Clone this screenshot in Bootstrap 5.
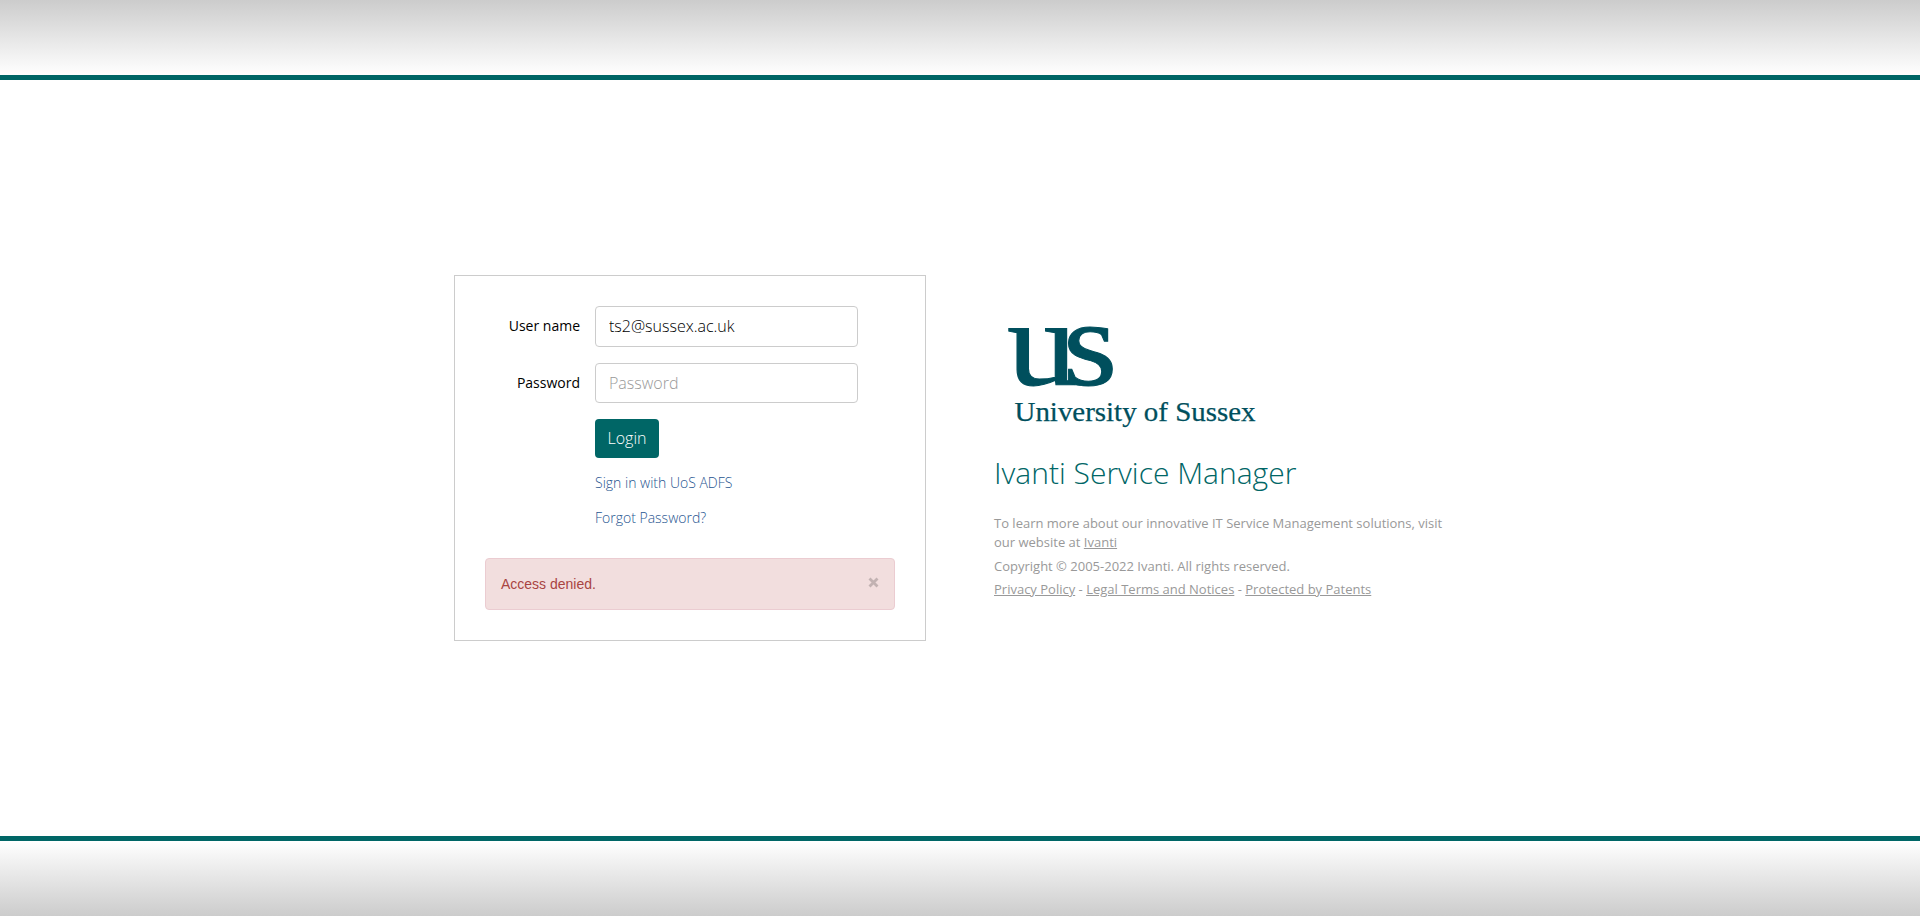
<!DOCTYPE html>
<html lang="en">
<head>
<meta charset="utf-8">
<meta name="viewport" content="width=device-width, initial-scale=1">
<title>Ivanti Service Manager</title>
<link href="https://cdn.jsdelivr.net/npm/bootstrap@5.3.0/dist/css/bootstrap.min.css" rel="stylesheet">
<style>
body{font-family:"Open Sans",sans-serif;font-size:14px;line-height:20px;color:#000;background:#fff}
.band{height:80px;flex:none}
.band-top{background:linear-gradient(#ccc,#fff);border-bottom:5px solid #006666}
.band-bottom{background:linear-gradient(#fff,#ccc);border-top:5px solid #006666}
.panes{width:1012px;gap:68px}
.login-box{width:472px;height:366px;border:1px solid #ccc;padding:30px}
.field{display:grid;grid-template-columns:95px 263px;column-gap:15px}
.field label{text-align:right}
.field .user-label{padding-bottom:2px}
.login-box .form-control{height:41px;padding:0 13px 2px;border:1px solid #ccc;border-radius:4px;font-size:16px;font-weight:300;color:#000}
.login-box .form-control.pw{height:40px;padding-bottom:0}
.form-control::placeholder{color:#999;opacity:1}
.btn-login{width:64px;height:39px;padding:0 0 2px;border:0;border-radius:4px;background:#006666;color:#fff;font-size:16px;font-weight:300}
.btn-login:hover{background:#005555;color:#fff}
.actions{margin-left:110px}
.actions a{color:#1f5590;font-weight:300;text-decoration:none;margin-top:15px}
.denied{height:52px;margin-top:30px;padding:0 15px;border:1px solid #ebccd1;border-radius:4px;background:#f2dede;color:#a94442;font-family:"Liberation Sans",sans-serif}
.info{width:472px;height:366px}
.info h1{font-size:30px;line-height:40px;font-weight:300;color:#006666}
.fine{margin-top:21px;font-size:13px;line-height:19px;color:#999}
.fine p{margin-bottom:5px}
.fine a{color:#999}
</style>
</head>
<body>
<div class="d-flex flex-column vh-100 overflow-hidden">
  <header class="band band-top"></header>
  <main class="flex-grow-1 d-flex align-items-center justify-content-center">
    <div class="panes d-flex">
      <form class="login-box">
        <div class="field align-items-center">
          <label for="user" class="user-label">User name</label>
          <input id="user" class="form-control" type="text" value="ts2@sussex.ac.uk">
        </div>
        <div class="field align-items-center mt-3">
          <label for="pass">Password</label>
          <input id="pass" class="form-control pw" type="password" placeholder="Password">
        </div>
        <div class="actions mt-3 d-flex flex-column align-items-start">
          <button class="btn btn-login" type="button">Login</button>
          <a href="#">Sign in with UoS ADFS</a>
          <a href="#">Forgot Password?</a>
        </div>
        <div class="denied d-flex align-items-center justify-content-between">
          <span>Access denied.</span>
          <svg width="12" height="12" viewBox="0 0 12 12" class="mb-1" aria-label="Close"><path d="M2.500 2.500l8 8M10.500 2.500l-8 8" stroke="#c2b2b2" stroke-width="2.800"/></svg>
        </div>
      </form>
      <section class="info">
        <svg class="d-block" width="300" height="178" viewBox="994 275 300 178" fill="#004f5d" stroke="#004f5d" font-family="Liberation Serif, serif">
          <text transform="translate(1007 385) scale(1.15 1)" font-size="122" stroke-width="1" dx="0 -12.500">us</text>
          <text x="1014.500" y="421" font-size="28" stroke-width=".25" textLength="241" lengthAdjust="spacingAndGlyphs">University of Sussex</text>
        </svg>
        <h1 class="mb-0">Ivanti Service Manager</h1>
        <div class="fine">
          <p>To learn more about our innovative IT Service Management solutions, visit<br>our website at <a href="#">Ivanti</a></p>
          <p class="mb-1">Copyright © 2005-2022 Ivanti. All rights reserved.</p>
          <p class="mb-0"><a href="#">Privacy Policy</a> - <a href="#">Legal Terms and Notices</a> - <a href="#">Protected by Patents</a></p>
        </div>
      </section>
    </div>
  </main>
  <footer class="band band-bottom"></footer>
</div>
<script src="https://cdn.jsdelivr.net/npm/bootstrap@5.3.0/dist/js/bootstrap.bundle.min.js"></script>
</body>
</html>
